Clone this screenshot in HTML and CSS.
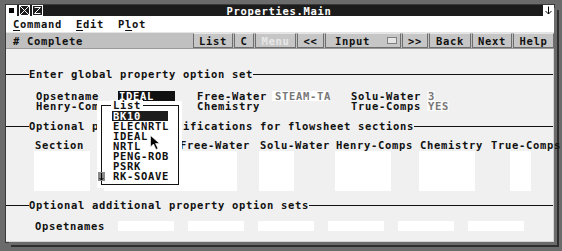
FILE: index.html
```html
<!DOCTYPE html>
<html lang="en">
  <head>
    <meta charset="UTF-8" />
    <title>Properties.Main</title>
    <link rel="stylesheet" href="styles.css">
  </head>
  <body>
    <div class="window">
      <div class="inner">
        <div class="titlebar">
          <span class="tb-icon">
            <svg width="11" height="11" viewBox="0 0 11 11"><rect x="0.5" y="0.5" width="10" height="10" fill="#fff" stroke="#fff"/><rect x="3" y="3" width="5" height="5" fill="#000"/></svg>
          </span>
          <span class="tb-icon">
            <svg width="11" height="11" viewBox="0 0 11 11"><rect x="0.5" y="0.5" width="10" height="10" fill="#1c1c1c" stroke="#fff"/><path d="M1 1 L10 10 M10 1 L1 10" stroke="#fff"/></svg>
          </span>
          <span class="tb-icon">
            <svg width="11" height="11" viewBox="0 0 11 11"><rect x="0.5" y="0.5" width="10" height="10" fill="#1c1c1c" stroke="#fff"/><path d="M2.5 2.5 H8.5 L2.5 8.5 H8.5" stroke="#fff" fill="none"/></svg>
          </span>
          <span class="title">Properties.Main</span>
          <span class="tb-icon">
            <svg width="11" height="11" viewBox="0 0 11 11"><rect x="0" y="0" width="11" height="11" fill="#fff"/><path d="M5.5 1.5 V9 M2.5 6 L5.5 9 L8.5 6" stroke="#000" fill="none"/></svg>
          </span>
        </div>

        <div class="menubar">
          <span class="menu-item"><u>C</u>ommand</span>
          <span class="menu-item"><u>E</u>dit</span>
          <span class="menu-item">P<u>l</u>ot</span>
        </div>

        <div class="toolbar">
          <span class="status"># Complete</span>
          <div class="buttons">
            <span class="btn w-list">List</span>
            <span class="btn w-c">C</span>
            <span class="btn w-menu disabled">Menu</span>
            <span class="btn w-prev">&lt;&lt;</span>
            <span class="btn w-input">Input <i class="input-box"></i></span>
            <span class="btn w-next">&gt;&gt;</span>
            <span class="btn w-back">Back</span>
            <span class="btn w-nav">Next</span>
            <span class="btn w-help">Help</span>
          </div>
        </div>

        <div class="content">
          <div class="section-head">Enter global property option set</div>

          <div class="globals">
            <span>Opsetname</span><span><span class="value selected">IDEAL</span></span>
            <span>Free-Water</span><span><span class="value filled">STEAM-TA</span></span>
            <span>Solu-Water</span><span><span class="value soft">3</span></span>
            <span>Henry-Comps</span><span></span>
            <span>Chemistry</span><span></span>
            <span>True-Comps</span><span><span class="value soft">YES</span></span>
          </div>

          <div class="section-head">Optional property specifications for flowsheet sections</div>

          <div class="sections">
            <span class="col-head">Section</span>
            <span class="col-head"></span>
            <span class="col-head">Free-Water</span>
            <span class="col-head">Solu-Water</span>
            <span class="col-head">Henry-Comps</span>
            <span class="col-head">Chemistry</span>
            <span class="col-head">True-Comps</span>
            <span class="field f-section"></span>
            <span class="field f-opset"></span>
            <span class="field f-free"></span>
            <span class="field f-solu"></span>
            <span class="field f-wide"></span>
            <span class="field f-wide"></span>
            <span class="field f-true"></span>
          </div>

          <div class="section-head">Optional additional property option sets</div>

          <div class="opsets">
            <span class="opsets-label">Opsetnames</span>
            <span class="slot"></span>
            <span class="slot"></span>
            <span class="slot"></span>
            <span class="slot"></span>
            <span class="slot"></span>
            <span class="slot"></span>
          </div>

          <div class="popup">
            <div class="list-box">
              <span class="list-title">List</span>
              <div class="list-item active">BK10</div>
              <div class="list-item">ELECNRTL</div>
              <div class="list-item">IDEAL</div>
              <div class="list-item">NRTL</div>
              <div class="list-item">PENG-ROB</div>
              <div class="list-item">PSRK</div>
              <div class="list-item">RK-SOAVE</div>
            </div>
            <span class="scroll-down">
              <svg width="7" height="9" viewBox="0 0 7 9"><path d="M3.5 1 V8 M1.5 6 L3.5 8 L5.5 6" stroke="#000" fill="none"/></svg>
            </span>
          </div>

          <svg class="cursor" width="11" height="16" viewBox="0 0 11 16">
            <path d="M0.5 0.5 L0.5 12 L3.5 9 L6 14.5 L8 13.5 L5.5 8.5 L9.5 8.5 Z" fill="#000" stroke="#fff" stroke-width="0.6"/>
          </svg>
        </div>
      </div>
    </div>
  </body>
</html>
```

FILE: styles.css
```css
body {
  margin: 0;
  background-color: #6b6b6b;
  font-family: "DejaVu Sans Mono", "Liberation Mono", monospace;
  font-weight: bold;
  font-size: 10.5px;
  letter-spacing: 0.68px;
  line-height: 10px;
  color: #111;
}
.window {
  height: 251px;
  box-sizing: border-box;
  padding: 5px 8px 9px 6px;
}
.inner {
  height: 100%;
  display: flex;
  flex-direction: column;
  box-shadow: 3px 3px 0 0 #6b6b6b, 5px 5px 0 0 #2e2e2e, 0 0 0 1px #3a3a3a;
}
.titlebar {
  height: 11px;
  background-color: #1c1c1c;
  display: flex;
  align-items: center;
  gap: 2px;
}
.tb-icon {
  display: flex;
  width: 11px;
  height: 11px;
}
.title {
  flex: 1;
  text-align: center;
  color: #fff;
  padding-right: 28px;
}
.menubar {
  height: 16px;
  background-color: #fff;
  display: flex;
  align-items: center;
  gap: 14px;
  padding-left: 7px;
}
.menu-item u {
  text-underline-offset: 2px;
}
.toolbar {
  height: 17px;
  box-sizing: border-box;
  background-color: #c0c0c0;
  border-top: 1px solid #e4e4e4;
  border-bottom: 1px solid #9a9a9a;
  display: flex;
  align-items: center;
  padding-left: 7px;
}
.status {
  flex: 1;
}
.buttons {
  display: flex;
  gap: 1px;
  height: 15px;
}
.btn {
  box-sizing: border-box;
  height: 15px;
  display: flex;
  align-items: center;
  justify-content: center;
  background-color: #c6c6c6;
  border: 1px solid #6e6e6e;
  border-top-color: #e6e6e6;
}
.btn.disabled {
  color: #e8e8e8;
}
.w-list { width: 40px; }
.w-c { width: 20px; }
.w-menu { width: 41px; }
.w-prev { width: 27px; }
.w-input { width: 76px; justify-content: space-between; padding: 0 3px 0 9px; }
.w-next { width: 26px; }
.w-back { width: 42px; }
.w-nav { width: 40px; }
.w-help { width: 41px; }
.input-box {
  width: 8px;
  height: 5px;
  background-color: #e4e4e4;
  border: 1px solid #808080;
}
.content {
  flex: 1;
  position: relative;
  background-color: #f0f0f0;
  border-right: 1px solid #d4d4d4;
  border-bottom: 1px solid #d4d4d4;
  padding-top: 20px;
}
.section-head {
  display: flex;
  align-items: center;
  height: 10px;
  white-space: nowrap;
}
.section-head::before {
  content: "";
  width: 23px;
  height: 1px;
  background-color: #111;
}
.section-head::after {
  content: "";
  flex: 1;
  height: 1px;
  background-color: #111;
}
.globals {
  display: grid;
  grid-template-columns: 82px 79px 75px 79px 76px auto;
  grid-auto-rows: 10px;
  margin: 12px 0 10px 30px;
  white-space: nowrap;
}
.value {
  display: inline-block;
  padding-left: 1px;
}
.selected {
  width: 56px;
  background-color: #111;
  color: #fff;
}
.filled {
  width: 54px;
  padding-left: 3px;
  background-color: #fff;
  color: #777;
}
.soft {
  background-color: #f9f9f9;
  color: #777;
}
.sections {
  display: grid;
  grid-template-columns: 70px 75px 80px 76px 84px 71px auto;
  grid-template-rows: 10px 40px;
  row-gap: 1px;
  margin: 9px 0 9px 28px;
  white-space: nowrap;
}
.col-head {
  padding-left: 1px;
}
.field {
  background-color: #fff;
}
.f-section { width: 56px; }
.f-opset { width: 75px; }
.f-free { width: 58px; }
.f-solu { width: 35px; }
.f-wide { width: 56px; }
.f-true { width: 21px; margin-left: 20px; }
.opsets {
  display: flex;
  align-items: center;
  gap: 14px;
  margin: 11px 0 0 29px;
  height: 10px;
}
.opsets-label {
  width: 69px;
}
.slot {
  width: 56px;
  height: 10px;
  background-color: #fff;
}
.popup {
  position: absolute;
  left: 91px;
  top: 52px;
  width: 85px;
  height: 87px;
  box-sizing: border-box;
  padding: 4px 3px 0 4px;
  background-color: #fff;
}
.list-box {
  position: relative;
  height: 80px;
  box-sizing: border-box;
  border: 1px solid #111;
  padding: 5px 0 0 10px;
}
.list-title {
  position: absolute;
  top: -6px;
  left: 9px;
  padding: 0 2px;
  background-color: #fff;
}
.list-item {
  height: 10px;
  padding-left: 1px;
}
.list-item.active {
  width: 55px;
  background-color: #1c1c1c;
  color: #fff;
}
.scroll-down {
  position: absolute;
  left: 1px;
  top: 71px;
  width: 7px;
  height: 9px;
  display: flex;
  background-color: #8a8a8a;
}
.cursor {
  position: absolute;
  left: 144px;
  top: 86px;
}
```
